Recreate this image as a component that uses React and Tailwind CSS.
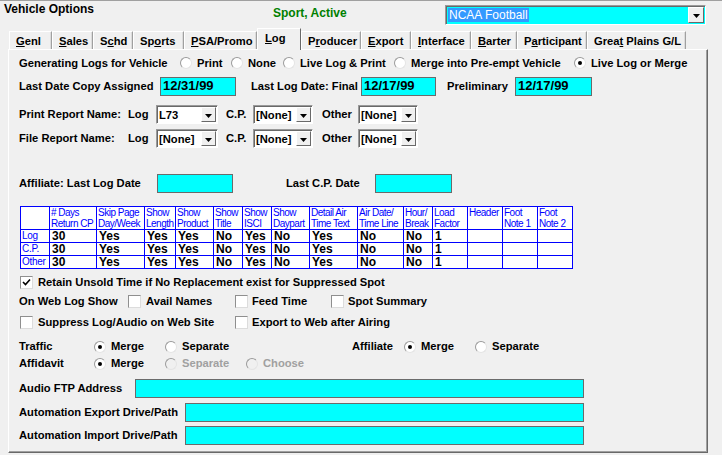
import React from 'react';

// Classic Windows form: Vehicle Options > Log tab

const Radio = ({ checked, disabled }) => (
  <span className={`flex items-center justify-center w-[12px] h-[12px] rounded-full border border-t-[#9a9a9a] border-l-[#9a9a9a] border-r-[#e4e4e4] border-b-[#e4e4e4] ${disabled ? 'bg-[#f0f0f0]' : 'bg-white'}`}>
    {checked && <span className="w-[4px] h-[4px] rounded-full bg-black" />}
  </span>
);

const RadioOpt = ({ label, checked, disabled, w }) => (
  <div className={`flex items-center shrink-0 ${w || ''}`}>
    <Radio checked={checked} disabled={disabled} />
    <span className={`ml-[5px] ${disabled ? 'text-[#a0a0a0]' : ''}`}>{label}</span>
  </div>
);

const Check = ({ checked }) => (
  <span className="flex items-center justify-center shrink-0 w-[13px] h-[13px] bg-white border border-[#8f8f8f] border-b-[#dcdcdc] border-r-[#dcdcdc]">
    {checked && (
      <svg width="9" height="9" viewBox="0 0 9 9">
        <path d="M1 4 L3.5 6.5 L8 1.5" fill="none" stroke="#000" strokeWidth="1.6" />
      </svg>
    )}
  </span>
);

const CyanBox = ({ w, children }) => (
  <div className={`shrink-0 h-[19px] bg-[#00ffff] border border-[#6b6b6b] pl-[2px] text-[13px] leading-[16px] ${w}`}>
    {children}
  </div>
);

const Arrow = () => (
  <svg width="7" height="4" viewBox="0 0 7 4">
    <path d="M0 0 H7 L3.5 4 Z" fill="#000" />
  </svg>
);

const Combo = ({ w, value }) => (
  <div className={`shrink-0 h-[19px] flex items-center bg-white border border-[#9a9a9a] border-r-white border-b-white shadow-[inset_1px_1px_0_#696969] ${w}`}>
    <span className="flex-1 pl-[2px] pt-[1px] overflow-hidden whitespace-nowrap">{value}</span>
    <span className="shrink-0 w-[15px] h-[15px] mr-[1px] flex items-end justify-center pb-[3px] bg-[#f0f0f0] border border-t-white border-l-white border-r-[#696969] border-b-[#696969]">
      <Arrow />
    </span>
  </div>
);

const tabs = [
  { w: 'w-[43px]', el: <><span className="underline">G</span>enl</> },
  { w: 'w-[41px]', el: <><span className="underline">S</span>ales</> },
  { w: 'w-[40px]', el: <>S<span className="underline">c</span>hd</> },
  { w: 'w-[51px]', el: <>Sp<span className="underline">o</span>rts</> },
  { w: 'w-[73px]', el: <><span className="underline">P</span>SA/Promo</> },
  { w: 'w-[44px]', el: <><span className="underline">L</span>og</>, active: true },
  { w: 'w-[60px]', el: <>P<span className="underline">r</span>oducer</> },
  { w: 'w-[50px]', el: <><span className="underline">E</span>xport</> },
  { w: 'w-[60px]', el: <><span className="underline">I</span>nterface</> },
  { w: 'w-[46px]', el: <><span className="underline">B</span>arter</> },
  { w: 'w-[70px]', el: <>P<span className="underline">a</span>rticipant</> },
  { w: 'w-[99px]', el: <>Grea<span className="underline">t</span> Plains G/L</> },
];

const headers = [
  '', '# Days\nReturn CP', 'Skip Page\nDay/Week', 'Show\nLength', 'Show\nProduct', 'Show\nTitle',
  'Show\nISCI', 'Show\nDaypart', 'Detail Air\nTime Text', 'Air Date/\nTime Line', 'Hour/\nBreak',
  'Load\nFactor', 'Header', 'Foot\nNote 1', 'Foot\nNote 2',
];

const rows = [
  ['Log', '30', 'Yes', 'Yes', 'Yes', 'No', 'Yes', 'No', 'Yes', 'No', 'No', '1', '', '', ''],
  ['C.P.', '30', 'Yes', 'Yes', 'Yes', 'No', 'Yes', 'No', 'Yes', 'No', 'No', '1', '', '', ''],
  ['Other', '30', 'Yes', 'Yes', 'Yes', 'No', 'Yes', 'No', 'Yes', 'No', 'No', '1', '', '', ''],
];

export default function App() {
  return (
    <div className="w-[722px] h-[455px] bg-[#f0f0f0] overflow-hidden text-black text-[11.2px] leading-[13px] font-bold font-['Liberation_Sans',Arial,sans-serif] border-t border-[#a0a0a0]">
      {/* header */}
      <div className="flex h-[27px]">
        <div className="w-[273px] pl-[4px] pt-[2px] text-[12px]">Vehicle Options</div>
        <div className="w-[172px] pt-[6px] text-[12px] text-[#008000]">Sport, Active</div>
        <div className="mt-[4px] w-[261px] h-[20px] flex items-center bg-[#00ffff] border border-[#9a9a9a] border-r-white border-b-white shadow-[inset_1px_1px_0_#696969]">
          <div className="flex-1 pl-[2px]">
            <span className="bg-[#3399ff] text-white font-normal text-[12px] leading-[15px] px-[1px]">NCAA Football</span>
          </div>
          <span className="w-[16px] h-[16px] mr-[1px] flex items-end justify-center pb-[4px] bg-[#f0f0f0] border border-t-white border-l-white border-r-[#696969] border-b-[#696969]">
            <Arrow />
          </span>
        </div>
      </div>

      {/* tabs */}
      <div className="flex items-end h-[21px] pl-[9px]">
        {tabs.map((t, i) =>
          t.active ? (
            <div key={i} className={`relative top-[1px] z-10 h-[22px] bg-[#f0f0f0] border-t border-l border-white border-r border-r-[#696969] pl-[7px] pt-[3px] ${t.w}`}>
              {t.el}
            </div>
          ) : (
            <div key={i} className={`h-[18px] border-t border-l border-white border-r border-r-[#a0a0a0] shadow-[inset_-1px_0_0_#dcdcdc] pl-[6px] pt-[3px] whitespace-nowrap ${t.w}`}>
              {t.el}
            </div>
          )
        )}
      </div>

      {/* panel */}
      <div className="ml-[8px] w-[700px] h-[404px] flex flex-col pl-[10px] border-t border-l border-white border-r border-b border-r-[#696969] border-b-[#696969] shadow-[inset_-1px_-1px_0_#a0a0a0]">
        <div className="mt-[6px] h-[14px] flex items-center">
          <span className="w-[161px] shrink-0">Generating Logs for Vehicle</span>
          <RadioOpt w="w-[51px]" label="Print" />
          <RadioOpt w="w-[52px]" label="None" />
          <RadioOpt w="w-[111px]" label="Live Log & Print" />
          <RadioOpt w="w-[180px]" label="Merge into Pre-empt Vehicle" />
          <RadioOpt label="Live Log or Merge" checked />
        </div>

        <div className="mt-[7px] h-[19px] flex items-center">
          <span className="w-[141px] shrink-0">Last Date Copy Assigned</span>
          <CyanBox w="w-[76px]">12/31/99</CyanBox>
          <span className="ml-[15px] w-[110px] shrink-0">Last Log Date: Final</span>
          <CyanBox w="w-[75px]">12/17/99</CyanBox>
          <span className="ml-[11px] w-[68px] shrink-0">Preliminary</span>
          <CyanBox w="w-[77px]">12/17/99</CyanBox>
        </div>

        <div className="mt-[9px] h-[19px] flex items-center">
          <span className="w-[109px] shrink-0">Print Report Name:</span>
          <span className="w-[28px] shrink-0">Log</span>
          <Combo w="w-[62px]" value="L73" />
          <span className="ml-[8px] w-[27px] shrink-0">C.P.</span>
          <Combo w="w-[60px]" value="[None]" />
          <span className="ml-[9px] w-[36px] shrink-0">Other</span>
          <Combo w="w-[60px]" value="[None]" />
        </div>

        <div className="mt-[5px] h-[19px] flex items-center">
          <span className="w-[109px] shrink-0">File Report Name:</span>
          <span className="w-[28px] shrink-0">Log</span>
          <Combo w="w-[62px]" value="[None]" />
          <span className="ml-[8px] w-[27px] shrink-0">C.P.</span>
          <Combo w="w-[60px]" value="[None]" />
          <span className="ml-[9px] w-[36px] shrink-0">Other</span>
          <Combo w="w-[60px]" value="[None]" />
        </div>

        <div className="mt-[26px] h-[19px] flex items-center">
          <span className="w-[138px] shrink-0">Affiliate: Last Log Date</span>
          <CyanBox w="w-[76px]" />
          <span className="ml-[53px] w-[89px] shrink-0">Last C.P. Date</span>
          <CyanBox w="w-[77px]" />
        </div>

        {/* log settings grid */}
        <div className="mt-[13px] ml-[1px] w-fit grid gap-px p-px bg-[#0000ff] grid-cols-[28px_46px_47px_30px_37px_28px_28px_37px_47px_45px_28px_34px_34px_34px_34px] grid-rows-[22px_12px_12px_12px]">
          {headers.map((h, i) => (
            <div key={'h' + i} className="bg-white text-[#0000ff] font-normal text-[10px] tracking-[-0.5px] leading-[11px] pl-[1px] whitespace-pre overflow-hidden">
              {h}
            </div>
          ))}
          {rows.map((r, ri) =>
            r.map((c, ci) =>
              ci === 0 ? (
                <div key={ri + '-' + ci} className="bg-white text-[#0000ff] font-normal text-[10px] tracking-[-0.3px] leading-[11px] pl-[1px] overflow-hidden">
                  {c}
                </div>
              ) : (
                <div key={ri + '-' + ci} className="bg-white text-[12px] leading-[12px] pl-[2px] overflow-hidden whitespace-nowrap">
                  {c}
                </div>
              )
            )
          )}
        </div>

        <div className="mt-[7px] h-[13px] flex items-center">
          <span className="ml-[1px]"><Check checked /></span>
          <span className="ml-[5px]">Retain Unsold Time if No Replacement exist for Suppressed Spot</span>
        </div>

        <div className="mt-[6px] h-[13px] flex items-center">
          <span className="w-[109px] shrink-0">On Web Log Show</span>
          <Check />
          <span className="ml-[5px] w-[89px] shrink-0">Avail Names</span>
          <Check />
          <span className="ml-[4px] w-[79px] shrink-0">Feed Time</span>
          <Check />
          <span className="ml-[4px]">Spot Summary</span>
        </div>

        <div className="mt-[8px] h-[13px] flex items-center">
          <span className="ml-[1px]"><Check /></span>
          <span className="ml-[5px] w-[197px] shrink-0">Suppress Log/Audio on Web Site</span>
          <Check />
          <span className="ml-[4px]">Export to Web after Airing</span>
        </div>

        <div className="mt-[11px] h-[13px] flex items-center">
          <span className="w-[75px] shrink-0">Traffic</span>
          <RadioOpt w="w-[71px]" label="Merge" checked />
          <RadioOpt w="w-[187px]" label="Separate" />
          <span className="w-[52px] shrink-0">Affiliate</span>
          <RadioOpt w="w-[71px]" label="Merge" checked />
          <RadioOpt label="Separate" />
        </div>

        <div className="mt-[4px] h-[13px] flex items-center">
          <span className="w-[75px] shrink-0">Affidavit</span>
          <RadioOpt w="w-[71px]" label="Merge" checked />
          <RadioOpt w="w-[81px]" label="Separate" disabled />
          <RadioOpt label="Choose" disabled />
        </div>

        <div className="mt-[9px] h-[19px] flex items-center">
          <span className="w-[116px] shrink-0">Audio FTP Address</span>
          <CyanBox w="w-[449px]" />
        </div>
        <div className="mt-[5px] h-[19px] flex items-center">
          <span className="w-[166px] shrink-0">Automation Export Drive/Path</span>
          <CyanBox w="w-[399px]" />
        </div>
        <div className="mt-[4px] h-[19px] flex items-center">
          <span className="w-[166px] shrink-0">Automation Import Drive/Path</span>
          <CyanBox w="w-[399px]" />
        </div>
      </div>
    </div>
  );
}
